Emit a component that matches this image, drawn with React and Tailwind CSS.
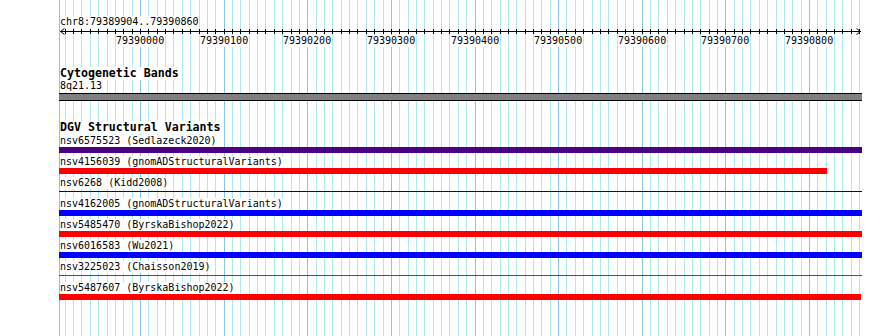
const FONT = { fontFamily: '"DejaVu Sans Mono", "Liberation Mono", monospace' };

// pixel column of every 10bp gridline, j = 0 is 79390000
const gridLines = [];
for (let j = -9; j <= 86; j++) {
  gridLines.push({ x: Math.floor(140.5 + 8.3625 * j), major: j % 10 === 0 });
}

const tickLabels = [0, 1, 2, 3, 4, 5, 6, 7, 8].map((k) => ({
  label: String(79390000 + k * 100),
  x: Math.floor(140.5 + 83.625 * k),
}));

const variants = [
  { name: "nsv6575523 (Sedlazeck2020)", bar: "bg-[#4b0082]", w: "w-full" },
  { name: "nsv4156039 (gnomADStructuralVariants)", bar: "bg-[#ff0000]", w: "w-[768px]" },
  { name: "nsv6268 (Kidd2008)", line: "bg-[#0000a0]" },
  { name: "nsv4162005 (gnomADStructuralVariants)", bar: "bg-[#0000ff]", w: "w-full" },
  { name: "nsv5485470 (ByrskaBishop2022)", bar: "bg-[#ff0000]", w: "w-full" },
  { name: "nsv6016583 (Wu2021)", bar: "bg-[#0000ff]", w: "w-full" },
  { name: "nsv3225023 (Chaisson2019)", line: "bg-[#e81010]" },
  { name: "nsv5487607 (ByrskaBishop2022)", bar: "bg-[#ff0000]", w: "w-[802px]" },
];

function Grid() {
  return (
    <svg className="absolute left-0 top-0" width="890" height="336" shapeRendering="crispEdges">
      <rect x="59" y="0" width="1" height="336" fill="#86c6e6" />
      {gridLines.map((g) => (
        <rect key={g.x} x={g.x} y="0" width="1" height="336" fill={g.major ? "#86c6e6" : "#aee9ef"} />
      ))}
    </svg>
  );
}

function Ruler() {
  return (
    <svg width="803" height="7" className="block">
      <line x1="1" y1="3.5" x2="802" y2="3.5" stroke="#000" shapeRendering="crispEdges" />
      {gridLines.map((g) => (
        <rect key={g.x} x={g.x - 59} y="1" width="1" height="5" fill="#000" shapeRendering="crispEdges" />
      ))}
      <polyline points="5.5,0.5 1.5,3.5 5.5,6.5" fill="none" stroke="#000" />
      <polyline points="797.5,0.5 801.5,3.5 797.5,6.5" fill="none" stroke="#000" />
    </svg>
  );
}

function Label({ children, bold }) {
  return (
    <div className={`flex ${bold ? "h-[13px]" : "h-[12px]"}`}>
      <span
        className={`ml-px bg-white text-black ${
          bold ? "text-[11.6px] leading-[13px] font-bold" : "text-[10px] leading-[12px]"
        }`}
      >
        {children}
      </span>
    </div>
  );
}

export default function App() {
  return (
    <div className="relative h-[336px] w-[890px] overflow-hidden bg-white" style={FONT}>
      <Grid />
      <div className="relative w-[862px] pl-[59px] pt-[16px]">
        <Label>chr8:79389904..79390860</Label>
        <Ruler />
        <div className="relative h-[12px]">
          {tickLabels.map((t) => (
            <span
              key={t.label}
              className="absolute top-0 h-[12px] bg-white text-[10px] leading-[12px] text-black"
              style={{ left: t.x - 59 - 24 }}
            >
              {t.label}
            </span>
          ))}
        </div>

        <div className="mt-[20px]">
          <Label bold>Cytogenetic Bands</Label>
          <Label>8q21.13</Label>
          <div className="mt-px h-[8px] w-full border-y border-black bg-[#808080]" />
        </div>

        <div className="mt-[20px]">
          <Label bold>DGV Structural Variants</Label>
          <div className="mt-px flex flex-col gap-[3px]">
            {variants.map((v) => (
              <div key={v.name}>
                <Label>{v.name}</Label>
                {v.bar ? (
                  <div className={`h-[6px] ${v.w} ${v.bar}`} />
                ) : (
                  <div className="h-[6px] pt-[2px]">
                    <div className={`h-px w-full ${v.line}`} />
                  </div>
                )}
              </div>
            ))}
          </div>
        </div>
      </div>
    </div>
  );
}
